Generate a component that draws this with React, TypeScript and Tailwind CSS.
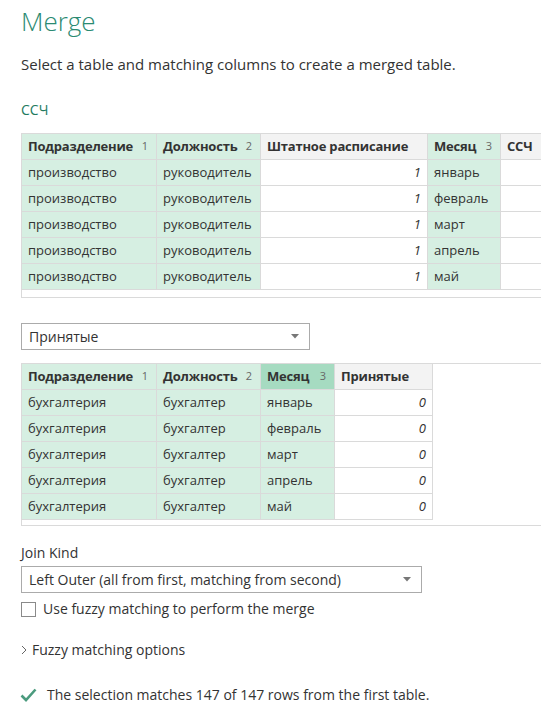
import React from "react";

const FONT = { fontFamily: '"Open Sans", "Noto Sans", sans-serif' };

function HeaderCell({ w, label, num, kind }: { w: string; label: string; num?: string; kind: "g" | "w" | "s" }) {
  const bg = kind === "g" ? "bg-[#d6efe2]" : kind === "s" ? "bg-[#a6dbc1]" : "bg-[#f3f3f3]";
  return (
    <div className={`${w} ${bg} h-[25px] shrink-0 border-r border-[#dadada] flex items-center justify-between pl-[6px] pr-[8px]`}>
      <span className="font-bold text-[13px] tracking-[-0.2px] text-[#333] whitespace-nowrap">{label}</span>
      {num && <span className="text-[11px] text-[#666]">{num}</span>}
    </div>
  );
}

function BodyCell({ w, text, kind, right }: { w: string; text: string; kind: "g" | "w"; right?: boolean }) {
  const bg = kind === "g" ? "bg-[#d6efe2]" : "bg-white";
  return (
    <div
      className={`${w} ${bg} h-[25px] shrink-0 border-r border-[#dadada] flex items-center ${right ? "justify-end pr-[6px] italic" : "pl-[6px]"}`}
    >
      <span className="text-[13px] text-[#333] whitespace-nowrap">{text}</span>
    </div>
  );
}

const months = ["январь", "февраль", "март", "апрель", "май"];

function Caret() {
  return (
    <svg width="8" height="5" viewBox="0 0 8 5">
      <path d="M0 0 L8 0 L4 4.5 Z" fill="#777" />
    </svg>
  );
}

export default function App() {
  return (
    <div className="w-[541px] h-[727px] bg-white overflow-hidden text-[#333]" style={FONT}>
      <div className="pl-[21px] pt-[4px]">
        <div className="text-[26px] font-light text-[#2b8a72] leading-[34px]">Merge</div>
        <div className="mt-[16px] text-[15px] leading-[20px]">Select a table and matching columns to create a merged table.</div>
        <div className="mt-[26px] text-[14px] text-[#217a5e] leading-[20px]">ССЧ</div>
      </div>

      {/* Table 1 */}
      <div className="ml-[21px] mt-[13px] border-t border-l border-b border-[#dadada] overflow-hidden">
        <div className="flex border-b border-[#dadada]">
          <HeaderCell w="w-[135px]" label="Подразделение" num="1" kind="g" />
          <HeaderCell w="w-[104px]" label="Должность" num="2" kind="g" />
          <HeaderCell w="w-[167px]" label="Штатное расписание" kind="w" />
          <HeaderCell w="w-[73px]" label="Месяц" num="3" kind="g" />
          <HeaderCell w="w-[80px]" label="ССЧ" kind="w" />
        </div>
        {months.map((m) => (
          <div key={m} className="flex border-b border-[#dadada]">
            <BodyCell w="w-[135px]" text="производство" kind="g" />
            <BodyCell w="w-[104px]" text="руководитель" kind="g" />
            <BodyCell w="w-[167px]" text="1" kind="w" right />
            <BodyCell w="w-[73px]" text={m} kind="g" />
            <BodyCell w="w-[80px]" text="" kind="w" />
          </div>
        ))}
        <div className="h-[7px] bg-white" />
      </div>

      {/* Dropdown */}
      <div className="ml-[21px] mt-[25px] w-[289px] h-[27px] border border-[#ababab] flex items-center justify-between pl-[7px] pr-[10px]">
        <span className="text-[14px]">Принятые</span>
        <Caret />
      </div>

      {/* Table 2 */}
      <div className="ml-[21px] mt-[13px] border-t border-l border-b border-[#dadada] overflow-hidden">
        <div className="w-[411px]">
          <div className="flex border-b border-[#dadada]">
            <HeaderCell w="w-[135px]" label="Подразделение" num="1" kind="g" />
            <HeaderCell w="w-[104px]" label="Должность" num="2" kind="g" />
            <HeaderCell w="w-[74px]" label="Месяц" num="3" kind="s" />
            <HeaderCell w="w-[98px]" label="Принятые" kind="w" />
          </div>
          {months.map((m) => (
            <div key={m} className="flex border-b border-[#dadada]">
              <BodyCell w="w-[135px]" text="бухгалтерия" kind="g" />
              <BodyCell w="w-[104px]" text="бухгалтер" kind="g" />
              <BodyCell w="w-[74px]" text={m} kind="g" />
              <BodyCell w="w-[98px]" text="0" kind="w" right />
            </div>
          ))}
        </div>
        <div className="h-[5px] bg-white" />
      </div>

      {/* Join kind */}
      <div className="ml-[21px] mt-[18px] text-[14px] leading-[18px]">Join Kind</div>
      <div className="ml-[21px] mt-[4px] w-[401px] h-[27px] border border-[#ababab] flex items-center justify-between pl-[7px] pr-[10px]">
        <span className="text-[14px]">Left Outer (all from first, matching from second)</span>
        <Caret />
      </div>
      <div className="ml-[21px] mt-[7px] flex items-center">
        <div className="w-[15px] h-[15px] border border-[#8a8a8a] bg-white" />
        <span className="ml-[7px] text-[14px] leading-[18px]">Use fuzzy matching to perform the merge</span>
      </div>

      <div className="ml-[21px] mt-[23px] flex items-center">
        <svg width="6" height="10" viewBox="0 0 6 10">
          <path d="M1 1 L5 5 L1 9" fill="none" stroke="#666" strokeWidth="1" />
        </svg>
        <span className="ml-[5px] text-[14px] leading-[18px]">Fuzzy matching options</span>
      </div>

      <div className="ml-[20px] mt-[27px] flex items-center">
        <svg width="17" height="14" viewBox="0 0 17 14">
          <path d="M1.5 7.5 L6 12 L15.5 1.5" fill="none" stroke="#4b9b7e" strokeWidth="2.6" />
        </svg>
        <span className="ml-[10px] text-[14px] leading-[18px]">The selection matches 147 of 147 rows from the first table.</span>
      </div>
    </div>
  );
}
